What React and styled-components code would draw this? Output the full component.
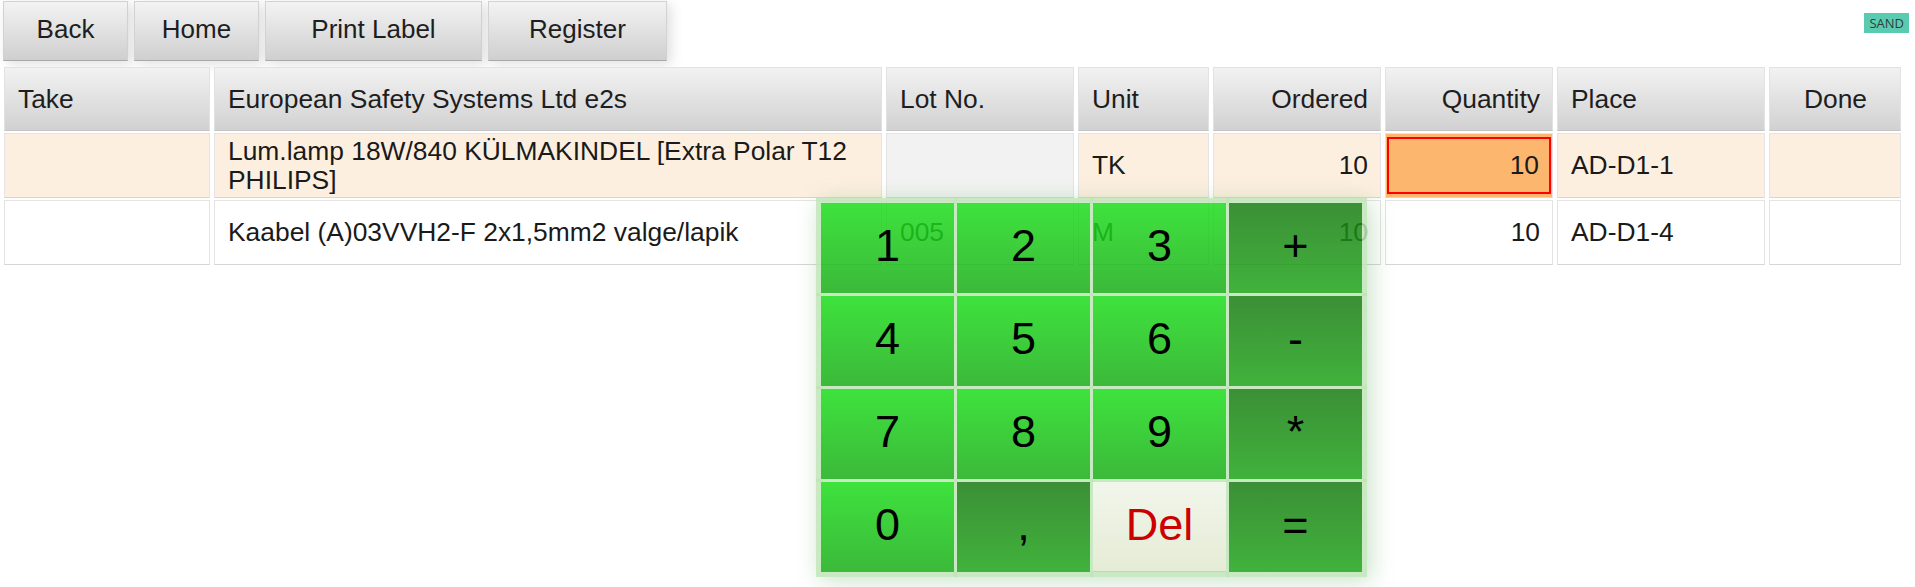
import React from 'react'
import styled, { createGlobalStyle } from 'styled-components'

const GlobalStyle = createGlobalStyle`
  body {
    margin: 0;
    background: #ffffff;
    font-family: "Liberation Sans", Arial, sans-serif;
    color: #1a1a1a;
  }
`

const Page = styled.div`
  position: relative;
  width: 1915px;
  height: 587px;
  overflow: hidden;
`

const Toolbar = styled.div`
  box-sizing: border-box;
  display: flex;
  align-items: flex-start;
  gap: 6px;
  height: 65px;
  padding: 1px 6px 0 3px;
`

const ToolButton = styled.button`
  box-sizing: border-box;
  width: ${p => p.$width}px;
  height: 60px;
  border: 1px solid #d2d2d2;
  border-bottom-color: #a9a9a9;
  background: linear-gradient(#f3f3f3, #cfcfcf);
  box-shadow: 4px 3px 12px rgba(0, 0, 0, 0.13);
  font-family: "Liberation Sans", Arial, sans-serif;
  font-size: 26px;
  color: #1e1e1e;
  padding: 0 0 4px 0;
  cursor: pointer;
`

const Badge = styled.div`
  margin: 12px 0 0 auto;
  height: 20px;
  padding: 0 5px;
  background: #5acbb0;
  color: #2e3e3a;
  font-family: "Open Sans", sans-serif;
  font-size: 13px;
  line-height: 20px;
`

const Grid = styled.div`
  display: flex;
  flex-direction: column;
  gap: 2px;
  padding: 2px 4px 0 4px;
`

const Row = styled.div`
  display: grid;
  grid-template-columns: 206px 668px 188px 131px 168px 168px 208px 132px;
  column-gap: 4px;
  height: ${p => p.$height}px;
`

const justify = { left: 'flex-start', right: 'flex-end', center: 'center' }

const HeadCell = styled.div`
  box-sizing: border-box;
  display: flex;
  align-items: center;
  justify-content: ${p => justify[p.$align || 'left']};
  padding: 0 12px 0 13px;
  border: 1px solid #e2e2e2;
  border-bottom-color: #c4c4c4;
  background: linear-gradient(#f2f2f2, #d1d1d1);
  font-size: 26.4px;
  color: #1e1e1e;
`

const Cell = styled.div`
  box-sizing: border-box;
  display: flex;
  align-items: center;
  justify-content: ${p => justify[p.$align || 'left']};
  padding: ${p => (p.$tight ? '3px 1px' : '0 12px 0 13px')};
  border: 1px solid #e4e4e4;
  border-bottom-color: #d6d6d6;
  background: ${p => p.$bg || '#ffffff'};
  font-size: 26.4px;
  line-height: 29px;
  color: #1a1a1a;
`

const QtyInput = styled.input`
  box-sizing: border-box;
  width: 100%;
  height: 100%;
  border: 2px solid #ff0000;
  background: #fdb66d;
  padding: 0 10px 0 0;
  text-align: right;
  font-family: "Liberation Sans", Arial, sans-serif;
  font-size: 26.4px;
  color: #1a1a1a;
  outline: none;
`

// translucent pale green for the frame and the lines between keys
const FRAME = 'rgba(190, 229, 182, 0.85)'

const Keypad = styled.div`
  position: absolute;
  left: 816px;
  top: 198px;
  display: grid;
  grid-template-columns: repeat(4, 133px);
  grid-auto-rows: 90px;
  gap: 3px;
  border: 5px solid ${FRAME};
  background:
    repeating-linear-gradient(to right, transparent 0 133px, ${FRAME} 133px 136px),
    repeating-linear-gradient(to bottom, transparent 0 90px, ${FRAME} 90px 93px);
  box-shadow: 4px 4px 22px rgba(70, 150, 70, 0.28);
`

const keyBackgrounds = {
  digit: 'linear-gradient(rgba(28, 221, 27, 0.85), rgba(26, 173, 24, 0.85))',
  op: 'linear-gradient(rgba(25, 124, 18, 0.85), rgba(31, 165, 26, 0.85))',
  del: 'linear-gradient(rgba(240, 245, 233, 0.9), rgba(226, 234, 209, 0.9))',
}

const Key = styled.button`
  display: flex;
  align-items: center;
  justify-content: center;
  border: none;
  border-bottom: ${p => (p.$kind === 'del' ? '1px solid #c8cfbd' : 'none')};
  padding: 0 0 4px 0;
  background: ${p => keyBackgrounds[p.$kind]};
  font-family: "Liberation Sans", Arial, sans-serif;
  font-size: 45px;
  color: ${p => (p.$kind === 'del' ? '#cc0000' : '#000000')};
  cursor: pointer;
`

const buttons = [
  { label: 'Back', width: 125 },
  { label: 'Home', width: 125 },
  { label: 'Print Label', width: 217 },
  { label: 'Register', width: 179 },
]

const headers = [
  { label: 'Take' },
  { label: 'European Safety Systems Ltd e2s' },
  { label: 'Lot No.' },
  { label: 'Unit' },
  { label: 'Ordered', align: 'right' },
  { label: 'Quantity', align: 'right' },
  { label: 'Place' },
  { label: 'Done', align: 'center' },
]

const keys = [
  ['1', 'digit'], ['2', 'digit'], ['3', 'digit'], ['+', 'op'],
  ['4', 'digit'], ['5', 'digit'], ['6', 'digit'], ['-', 'op'],
  ['7', 'digit'], ['8', 'digit'], ['9', 'digit'], ['*', 'op'],
  ['0', 'digit'], [',', 'op'], ['Del', 'del'], ['=', 'op'],
]

const PEACH = '#fdefe0'

export default function App() {
  return (
    <Page>
      <GlobalStyle />
      <Toolbar>
        {buttons.map(b => (
          <ToolButton key={b.label} $width={b.width}>{b.label}</ToolButton>
        ))}
        <Badge>SAND</Badge>
      </Toolbar>

      <Grid>
        <Row $height={64}>
          {headers.map(h => (
            <HeadCell key={h.label} $align={h.align}>{h.label}</HeadCell>
          ))}
        </Row>

        <Row $height={65}>
          <Cell $bg={PEACH} />
          <Cell $bg={PEACH}>Lum.lamp 18W/840 KÜLMAKINDEL [Extra Polar T12 PHILIPS]</Cell>
          <Cell $bg="#f2f2f2" />
          <Cell $bg={PEACH}>TK</Cell>
          <Cell $bg={PEACH} $align="right">10</Cell>
          <Cell $bg="#fdb66d" $tight>
            <QtyInput defaultValue="10" readOnly />
          </Cell>
          <Cell $bg={PEACH}>AD-D1-1</Cell>
          <Cell $bg={PEACH} />
        </Row>

        <Row $height={65}>
          <Cell />
          <Cell>Kaabel (A)03VVH2-F 2x1,5mm2 valge/lapik</Cell>
          <Cell>005</Cell>
          <Cell>M</Cell>
          <Cell $align="right">10</Cell>
          <Cell $align="right">10</Cell>
          <Cell>AD-D1-4</Cell>
          <Cell />
        </Row>
      </Grid>

      <Keypad>
        {keys.map(([label, kind]) => (
          <Key key={label} $kind={kind}>{label}</Key>
        ))}
      </Keypad>
    </Page>
  )
}
